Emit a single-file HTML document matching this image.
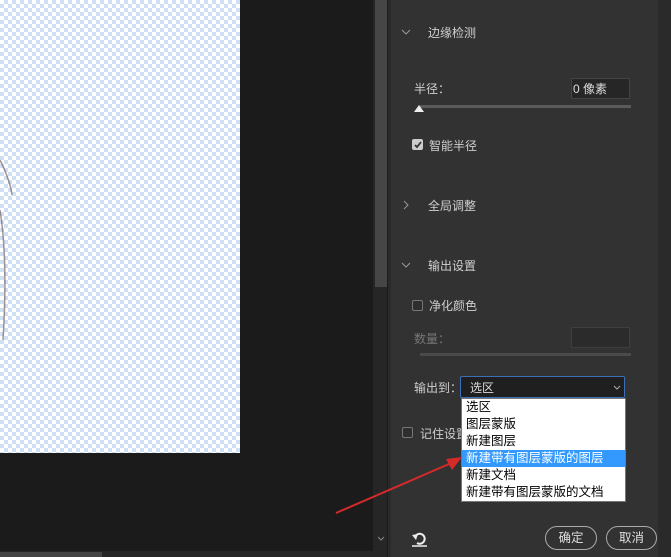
<!DOCTYPE html>
<html><head><meta charset="utf-8"><style>
*{margin:0;padding:0;box-sizing:border-box}
body{width:671px;height:557px;background:#1b1b1b;position:relative;overflow:hidden;font-family:"Liberation Sans","Noto Sans CJK SC",sans-serif;font-size:12px;color:#cfcfcf}
.a{position:absolute}
.img{left:0;top:0;width:240px;height:453px;background-color:#fff;background-image:repeating-conic-gradient(#d0e0f4 0 25%,#fff 0 50%);background-size:8px 8px}
.t{white-space:nowrap}
.cb{width:11px;height:11px;border:1px solid #777;border-radius:2px;background:#2e2e2e}
.dd div{height:17px;line-height:16px;padding-left:4px;color:#000;font-size:12.5px}
.btn{border:1px solid #aaa;border-radius:12px;height:24px;line-height:22px;text-align:center;color:#ddd;font-size:12.5px}
</style></head><body>
<div class="a img"></div>
<svg class="a" style="left:0;top:150px" width="20" height="200"><path d="M0 10 Q10 30 12 45 M0 60 Q8 110 3 190" stroke="#6a5048" stroke-width="1.5" fill="none" opacity=".6"/></svg>
<div class="a" style="left:373px;top:0;width:14px;height:557px;background:#262626"></div>
<div class="a" style="left:375px;top:0;width:12px;height:287px;background:#464646"></div>
<svg class="a" style="left:377px;top:536px" width="8" height="6"><path d="M1 1 L4 4 L7 1" stroke="#888" fill="none"/></svg>
<div class="a" style="left:0;top:551px;width:373px;height:6px;background:#262626"></div>
<div class="a" style="left:0;top:552px;width:102px;height:5px;background:#444"></div>
<div class="a" style="left:388px;top:0;width:3px;height:557px;background:#2a2a2a"></div>
<div class="a" style="left:391px;top:0;width:267px;height:557px;background:#323232"></div>
<div class="a" style="left:658px;top:0;width:13px;height:557px;background:#2a2a2a"></div>

<svg class="a" style="left:401px;top:29px" width="10" height="7"><path d="M1 1 L5 5 L9 1" stroke="#999" fill="none"/></svg>
<div class="a t" style="left:428px;top:24px">边缘检测</div>
<div class="a t" style="left:414px;top:80px">半径：</div>
<div class="a" style="left:571px;top:78px;width:59px;height:21px;background:#262626;border:1px solid #444"></div>
<div class="a t" style="left:573px;top:80px;color:#ddd">0 像素</div>
<div class="a" style="left:420px;top:105px;width:211px;height:3px;background:#5a5a5a"></div>
<svg class="a" style="left:413px;top:103px" width="12" height="10"><path d="M1 9 L6 2 L11 9 Z" fill="#eee"/></svg>
<div class="a cb" style="left:412px;top:139px;background:#ccc;border-color:#ccc"></div>
<svg class="a" style="left:413px;top:140px" width="10" height="10"><path d="M2 5 L4 7 L8 2" stroke="#333" stroke-width="1.8" fill="none"/></svg>
<div class="a t" style="left:429px;top:137px">智能半径</div>
<svg class="a" style="left:403px;top:200px" width="7" height="10"><path d="M1 1 L5 5 L1 9" stroke="#999" fill="none"/></svg>
<div class="a t" style="left:428px;top:197px">全局调整</div>
<svg class="a" style="left:401px;top:262px" width="10" height="7"><path d="M1 1 L5 5 L9 1" stroke="#999" fill="none"/></svg>
<div class="a t" style="left:428px;top:257px">输出设置</div>
<div class="a cb" style="left:412px;top:300px"></div>
<div class="a t" style="left:429px;top:297px">净化颜色</div>
<div class="a t" style="left:414px;top:330px;color:#777">数量：</div>
<div class="a" style="left:571px;top:327px;width:59px;height:21px;background:#2b2b2b;border:1px solid #3e3e3e"></div>
<div class="a" style="left:420px;top:353px;width:211px;height:3px;background:#4a4a4a"></div>
<div class="a t" style="left:414px;top:379px">输出到：</div>
<div class="a" style="left:460px;top:376px;width:165px;height:22px;background:#1f1f1f;border:1px solid #3c6fb8;border-radius:2px"></div>
<div class="a t" style="left:470px;top:379px;color:#ddd">选区</div>
<svg class="a" style="left:613px;top:385px" width="8" height="6"><path d="M1 1 L4 4 L7 1" stroke="#aaa" fill="none"/></svg>
<div class="a cb" style="left:402px;top:427px"></div>
<div class="a t" style="left:420px;top:425px">记住设置</div>
<div class="a dd" style="left:461px;top:398px;width:165px;height:104px;background:#fff;border:1px solid #777">
<div>选区</div><div>图层蒙版</div><div>新建图层</div><div style="background:#3399ff;color:#fff">新建带有图层蒙版的图层</div><div>新建文档</div><div>新建带有图层蒙版的文档</div>
</div>
<svg class="a" style="left:330px;top:445px" width="140" height="75"><path d="M6 68 L126 16" stroke="#d42a2a" stroke-width="2"/><path d="M132 12 L116 14 L122 25 Z" fill="#d42a2a"/></svg>
<svg class="a" style="left:410px;top:529px" width="20" height="20"><path d="M5 8 A5 5 0 1 1 7 14" stroke="#eee" stroke-width="2" fill="none"/><path d="M2 6 L8 5 L6 11 Z" fill="#eee"/><path d="M2 17 H17" stroke="#eee" stroke-width="1.5"/></svg>
<div class="a btn" style="left:545px;top:526px;width:52px">确定</div>
<div class="a btn" style="left:606px;top:526px;width:51px">取消</div>
</body></html>
